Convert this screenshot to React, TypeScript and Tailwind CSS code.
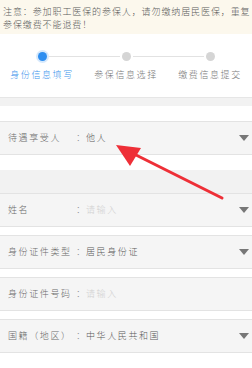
const steps = [
  { label: "身份信息填写", active: true },
  { label: "参保信息选择", active: false },
  { label: "缴费信息提交", active: false },
];

function Caret() {
  return (
    <svg width="10" height="6" viewBox="0 0 10 6" className="shrink-0">
      <path d="M0 0 L10 0 L5 6 Z" fill="#777" />
    </svg>
  );
}

function Row({
  label,
  value,
  placeholder,
  arrow = true,
}: {
  label: string;
  value?: string;
  placeholder?: string;
  arrow?: boolean;
}) {
  return (
    <div className="flex h-[34px] items-center border-y border-[#e3e3e3] bg-[#f5f5f5] pl-[8px] pr-[3px]">
      <span className="w-[68px] shrink-0 whitespace-nowrap tracking-[1.6px] text-[#6a6a6a]">{label}</span>
      <span className="w-[10px] shrink-0 text-[#888]">：</span>
      <span className={"flex-1 tracking-[1.6px] " + (value ? "text-[#5a5a5a]" : "text-[#d0d0d0]")}>
        {value ?? placeholder}
      </span>
      {arrow && <Caret />}
    </div>
  );
}

export default function App() {
  return (
    <div className="relative h-[368px] w-[252px] overflow-hidden bg-white font-['Noto_Sans_CJK_SC',sans-serif] text-[9px] font-light">
      {/* notice */}
      <div className="h-[34px] whitespace-nowrap bg-[#fcf8ed] pl-[3px] pt-[6px] leading-[12.5px] tracking-[0.9px] text-[#5a5a5a]">
        注意：参加职工医保的参保人，请勿缴纳居民医保，重复
        <br />
        参保缴费不能退费！
      </div>

      {/* steps */}
      <div className="flex h-[64px] border-b border-[#e6e6e6] pt-[15px]">
        {steps.map((s, i) => (
          <div key={s.label} className="flex flex-1 flex-col items-center">
            <div className="flex h-[14px] w-full items-center">
              <div className={"h-px flex-1 " + (i === 0 ? "bg-transparent" : "bg-[#e2e2e2]")} />
              {s.active ? (
                <div className="flex h-[13px] w-[13px] items-center justify-center rounded-full bg-[#d6e9fc]">
                  <div className="h-[9px] w-[9px] rounded-full bg-[#2e8ef0]" />
                </div>
              ) : (
                <div className="mx-[2px] h-[9px] w-[9px] rounded-full bg-[#d5d5d5]" />
              )}
              <div className={"h-px flex-1 " + (i === steps.length - 1 ? "bg-transparent" : "bg-[#e2e2e2]")} />
            </div>
            <div
              className={
                "mt-[5px] whitespace-nowrap tracking-[1.6px] " +
                (s.active ? "text-[#3b93ec]" : "text-[#777]")
              }
            >
              {s.label}
            </div>
          </div>
        ))}
      </div>

      <div className="h-[8px] bg-[#f2f2f2]" />

      <div className="py-[15px]">
        <Row label="待遇享受人" value="他人" />
      </div>

      <div className="h-[23px] bg-[#f2f2f2]" />

      <div className="flex flex-col gap-[8px]">
        <Row label="姓名" placeholder="请输入" />
        <Row label="身份证件类型" value="居民身份证" />
        <Row label="身份证件号码" placeholder="请输入" arrow={false} />
        <Row label="国籍（地区）" value="中华人民共和国" />
      </div>

      {/* red pointer arrow */}
      <svg className="pointer-events-none absolute left-0 top-0" width="252" height="368" viewBox="0 0 252 368">
        <line x1="222" y1="198" x2="130" y2="152" stroke="#ee2f37" strokeWidth="3" strokeLinecap="round" />
        <path d="M116 145 L141 148 L130 166 Z" fill="#ee2f37" />
      </svg>
    </div>
  );
}
